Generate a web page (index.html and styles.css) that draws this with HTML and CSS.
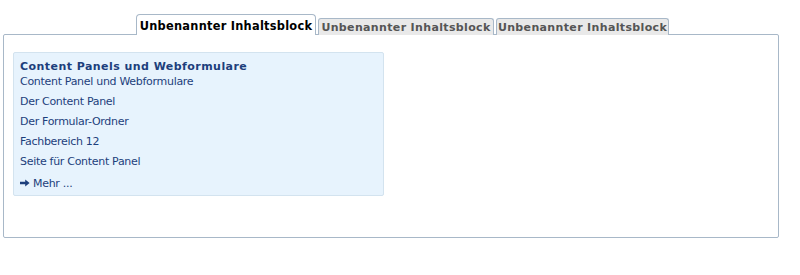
FILE: index.html
```html
<!DOCTYPE html>
<html lang="de">
<head>
<meta charset="utf-8">
<title>Inhaltsblöcke</title>
<link rel="stylesheet" href="styles.css">
</head>
<body>
<div class="wrap">
  <div class="tabs">
    <div class="tab active">Unbenannter Inhaltsblock</div>
    <div class="tab">Unbenannter Inhaltsblock</div>
    <div class="tab">Unbenannter Inhaltsblock</div>
  </div>
  <div class="panel">
    <div class="box">
      <div class="box-title">Content Panels und Webformulare</div>
      <div class="box-sub">Content Panel und Webformulare</div>
      <ul class="links">
        <li>Der Content Panel</li>
        <li>Der Formular-Ordner</li>
        <li>Fachbereich 12</li>
        <li>Seite für Content Panel</li>
        <li class="more"><svg class="arrow" width="10" height="8" viewBox="0 0 10 8"><path d="M0 2.8H5.2V0.4L9.6 4L5.2 7.6V5.2H0Z" fill="#1d3f7c"/></svg>Mehr ...</li>
      </ul>
    </div>
  </div>
</div>
</body>
</html>
```
FILE: styles.css
```css
html, body {
  margin: 0;
  padding: 0;
  background: #ffffff;
}
body {
  font-family: "DejaVu Sans", Verdana, sans-serif;
  font-size: 11px;
}
.wrap {
  padding: 14px 0 0 3px;
  width: 776px;
}
.tabs {
  display: flex;
  align-items: flex-end;
  gap: 2px;
  padding-left: 133px;
  position: relative;
  z-index: 1;
  margin-bottom: -1px;
}
.tab {
  font-weight: bold;
  color: #555;
  background: #e9e9e9;
  border: 1px solid #a8b8c8;
  border-bottom: none;
  border-radius: 3px 3px 0 0;
  padding: 1px 0 0;
  width: 174px;
  text-align: center;
  height: 15px;
  line-height: 15px;
  letter-spacing: 0.35px;
}
.tab:last-child {
  width: 171px;
}
.tab.active {
  color: #000;
  background: #fff;
  width: 178px;
  padding: 3px 0 1px;
  height: 16px;
  line-height: 16px;
  font-size: 11.4px;
  letter-spacing: 0.25px;
  border-radius: 4px 4px 0 0;
}
.panel {
  border: 1px solid #a8b8c8;
  border-radius: 2px;
  height: 185px;
  padding: 17px 9px 0;
}
.box {
  width: 357px;
  background: #e7f3fd;
  border: 1px solid #d3e3ef;
  border-radius: 2px;
  padding: 7px 6px 4px;
  color: #1d3f7c;
  letter-spacing: -0.3px;
}
.box-title {
  font-weight: bold;
  line-height: 13px;
  letter-spacing: 0.45px;
}
.box-sub {
  line-height: 14px;
  margin-top: 2px;
}
.links {
  list-style: none;
  margin: 0;
  padding: 0;
}
.links li {
  line-height: 14px;
  margin-top: 6px;
}
.links li.more {
  margin-top: 8px;
}
.arrow {
  margin-right: 3px;
  vertical-align: 0;
}
```
